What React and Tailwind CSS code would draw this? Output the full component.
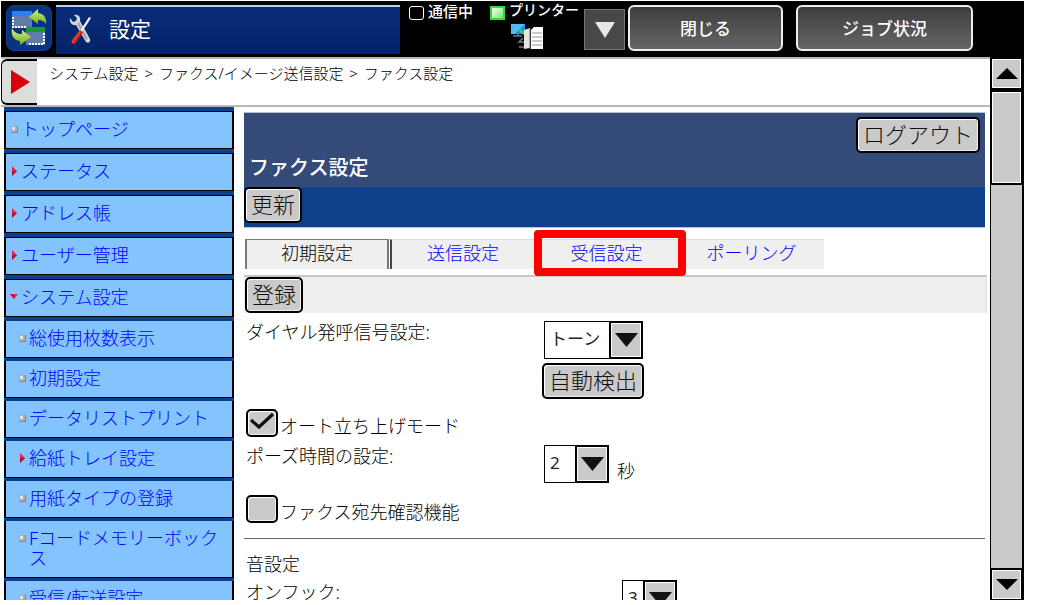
import React, { useState } from 'react';

const MENU = [
  { label: 'トップページ', mark: 'square' },
  { label: 'ステータス', mark: 'right' },
  { label: 'アドレス帳', mark: 'right' },
  { label: 'ユーザー管理', mark: 'right' },
  { label: 'システム設定', mark: 'down' },
];

const SUB_MENU = [
  { label: '総使用枚数表示', mark: 'square' },
  { label: '初期設定', mark: 'square' },
  { label: 'データリストプリント', mark: 'square' },
  { label: '給紙トレイ設定', mark: 'right' },
  { label: '用紙タイプの登録', mark: 'square' },
  { label: 'Fコードメモリーボックス', mark: 'square' },
  { label: '受信/転送設定', mark: 'square' },
];

const TABS = [
  { id: 'send', label: '送信設定' },
  { id: 'receive', label: '受信設定', marked: true },
  { id: 'polling', label: 'ポーリング' },
];

function Mark({ type }) {
  return (
    <svg className="h-5 w-2 shrink-0" viewBox="0 0 8 20">
      {type === 'square' && <>
        <rect x="1" y="7" width="7" height="7" fill="#858585" />
        <rect x="1" y="7" width="6" height="6" fill="#b0aca8" />
        <rect x="2" y="8" width="3" height="3" fill="#e4e4e4" />
      </>}
      {type === 'right' && <>
        <path d="M2 5l5 5-5 5z" fill="#f0204a" />
        <path d="M2 10h5l-5 5z" fill="#a01838" />
      </>}
      {type === 'down' && <>
        <path d="M0 7h8l-4 5z" fill="#e8203c" />
        <path d="M0 7h4v5z" fill="#b01830" />
      </>}
    </svg>
  );
}

function GrayButton({ children }) {
  return (
    <button className="h-9 shrink-0 rounded-[5px] border-2 border-black bg-[#cacaca] px-[5px] pb-[2px] text-[22px] leading-7 text-[#111] shadow-[inset_1px_1px_0_#fff,inset_-1px_-1px_0_#eee]">
      {children}
    </button>
  );
}

function Dropdown({ id, label, value, options, className }) {
  const [val, setVal] = useState(value);
  return (
    <div className={`flex h-[38px] border border-black bg-white ${className}`}>
      <select id={id} aria-label={label} value={val} onChange={e => setVal(e.target.value)}
        className="min-w-0 flex-1 appearance-none pb-[2px] pl-[5px] text-[17px] leading-8 font-normal text-[#222] outline-none">
        {options.map(o => <option key={o}>{o}</option>)}
      </select>
      <span className="flex w-[33px] shrink-0 items-center justify-center border-y border-r border-l-2 border-black bg-[#cacaca] shadow-[inset_0_0_0_1px_#fff]">
        <svg width="23" height="14" viewBox="0 0 23 14"><path d="M0 0h23L11.5 14z" fill="#111" /></svg>
      </span>
    </div>
  );
}

function CheckRow({ label, defaultChecked }) {
  return (
    <label className="flex h-8 items-start gap-[2px] pl-[2px]">
      <span className="grid shrink-0">
        <input type="checkbox" defaultChecked={defaultChecked}
          className="peer col-start-1 row-start-1 h-7 w-8 appearance-none rounded-[5px] border-2 border-black bg-[#cacaca] shadow-[inset_1px_1px_0_#fff,inset_-1px_-1px_0_#eee]" />
        <svg className="pointer-events-none invisible col-start-1 row-start-1 h-7 w-8 peer-checked:visible" viewBox="0 0 32 28">
          <path d="M5 11l8 7L27 5" fill="none" stroke="#111" strokeWidth="3.2" />
        </svg>
      </span>
      <span className="pt-[5px]">{label}</span>
    </label>
  );
}

function SyncIcon() {
  return (
    <svg width="36" height="38" viewBox="0 0 36 38">
      <defs>
        <linearGradient id="leaf" x1="0" y1="0" x2="0" y2="1">
          <stop offset="0" stopColor="#d5ef8a" />
          <stop offset="1" stopColor="#6fb41c" />
        </linearGradient>
      </defs>
      <rect x="1" y="2" width="20" height="17" fill="#5f7cab" />
      <rect x="1" y="2" width="20" height="5" fill="#2a80f0" />
      <path d="M2 8v10h14" fill="none" stroke="#fff" strokeWidth="2" strokeDasharray="2 1" />
      <rect x="15" y="19" width="19" height="17" fill="#5f7cab" />
      <rect x="15" y="18" width="19" height="5" fill="#1a9632" />
      <path d="M33 24v11H18" fill="none" stroke="#fff" strokeWidth="2" strokeDasharray="2 1" />
      <path d="M18 8L27 0v4c6 1 9 5 8 11-2-3-4-4-8-4v4z" fill="url(#leaf)" />
      <path d="M1 19c-1 7 1 12 8 13v4l11-8-9-7v4c-5 0-8-2-10-6z" fill="url(#leaf)" />
    </svg>
  );
}

function ToolsIcon() {
  return (
    <svg width="24" height="34" viewBox="0 0 24 34">
      <path d="M1 4l3 4 3-1 1-3-3-3c4-1 7 2 6 6l10 18c1 3-2 5-4 3L7 11C3 12 0 8 1 4z" fill="#d4d6d8" />
      <path d="M8 10l9 16 2-1L10 8z" fill="#a4a8ac" />
      <path d="M22 4l-9 14-2-1L20 3z" fill="#f2f2f2" />
      <path d="M11 16l3 2-7 11c-2 2-6 0-4-3z" fill="#e23a2a" />
      <path d="M13 18L6 29" stroke="#8c1710" />
    </svg>
  );
}

function PrinterIcon() {
  return (
    <svg width="32" height="27" viewBox="0 0 32 27">
      <rect x="0" y="1" width="14" height="10" fill="#1590e0" />
      <path d="M0 1h14L4 11H0z" fill="#52b8f5" />
      <path d="M7 11v2M2 13h9M12 15l-4 4h5M8 24h5" fill="none" stroke="#777" strokeWidth="1.5" />
      <path d="M9 7l4 4" stroke="#2be02b" strokeWidth="2.5" />
      <path d="M13 7l6-2v20l-6 1z" fill="#e4e4e4" />
      <path d="M20 7l3-3h9v22H20z" fill="#fff" />
      <path d="M21 10h10M21 14h10M21 18h10M21 22h10" stroke="#999" />
      <path d="M19 5v21" stroke="#777" />
    </svg>
  );
}

function TopBar() {
  const darkBtn = 'h-[46px] rounded-md border-2 border-[#eee] bg-linear-to-b from-[#3e3e3e] to-[#666] pt-px text-[17px] font-medium text-white';
  return (
    <header className="flex h-14 shrink-0 bg-black pt-1 pl-[5px] text-white">
      <button aria-label="切替" className="flex h-[46px] w-[46px] shrink-0 items-center justify-center rounded-lg border border-[#123f90] bg-[#0a3480]">
        <SyncIcon />
      </button>
      <div className="ml-1 flex h-[49px] min-w-0 flex-1 items-center gap-4 border-t-2 border-[#c0cce4] bg-linear-to-b from-[#0a2c78] to-[#04226a] pl-[13px]">
        <ToolsIcon />
        <h1 className="pb-1 text-[21px] leading-8 font-normal">設定</h1>
      </div>
      <div className="flex w-[184px] shrink-0 text-[15px] leading-4 font-medium">
        <div className="flex h-4 items-center gap-1 pl-[9px]">
          <span className="h-[14px] w-[15px] rounded-[3px] border border-white" />
          <span className="pb-1">通信中</span>
        </div>
        <div className="ml-4 flex flex-col">
          <div className="flex h-4 items-center gap-1 pl-px text-[14px] whitespace-nowrap">
            <span className="h-[14px] w-[15px] border-2 border-[#2fe02f] bg-linear-to-br from-white to-[#5fe65f]" />
            <span className="pb-[6px]">プリンター</span>
          </div>
          <div className="pt-[2px] pl-[22px]"><PrinterIcon /></div>
        </div>
      </div>
      <button aria-label="開く" className="mt-1 flex h-[41px] w-[41px] shrink-0 items-center justify-center border border-[#777] bg-[#484848]">
        <svg width="20" height="16" viewBox="0 0 20 16"><path d="M0 0h20L10 16z" fill="#e6e6e6" /></svg>
      </button>
      <button className={`ml-[3px] w-[155px] shrink-0 ${darkBtn}`}>閉じる</button>
      <button className={`mr-[51px] ml-[13px] w-[177px] shrink-0 ${darkBtn}`}>ジョブ状況</button>
    </header>
  );
}

function Sidebar() {
  return (
    <nav className="ml-[3px] w-[230px] shrink-0 overflow-hidden bg-[#0d408b] pt-1 text-[18px] leading-5 text-[#0000ff]">
      <ul className="flex flex-col gap-1">
        {MENU.map(m => (
          <li key={m.label}>
            <a href="#" className="flex h-[38px] items-center gap-[3px] border-x-2 border-y border-black bg-[#84c4fe] pb-[2px] pl-1">
              <Mark type={m.mark} />{m.label}
            </a>
          </li>
        ))}
      </ul>
      <ul className="mt-1 flex flex-col gap-[3px]">
        {SUB_MENU.map(m => (
          <li key={m.label}>
            <a href="#" className="flex min-h-[37px] items-start gap-[3px] border-x-2 border-b border-black bg-[#84c4fe] pt-[7px] pr-3 pb-[9px] pl-3">
              <Mark type={m.mark} /><span className="break-all">{m.label}</span>
            </a>
          </li>
        ))}
      </ul>
    </nav>
  );
}

function Scrollbar() {
  const box = 'flex shrink-0 items-center justify-center border border-white bg-[#cacaca]';
  return (
    <div className="flex w-[34px] shrink-0 flex-col bg-black pt-[2px] pb-px">
      <button aria-label="上へ" className={`mr-[3px] ml-[2px] h-[29px] ${box}`}>
        <svg width="22" height="11" viewBox="0 0 22 11"><path d="M0 11h22L11 0z" fill="#000" /></svg>
      </button>
      <div className={`mt-1 mr-[3px] ml-[2px] h-[91px] ${box}`} />
      <div className="mt-[2px] mr-[2px] ml-px flex-1 bg-[#cacaca]" />
      <button aria-label="下へ" className={`mt-[2px] mr-[3px] ml-[2px] h-[29px] ${box}`}>
        <svg width="22" height="11" viewBox="0 0 22 11"><path d="M0 0h22L11 11z" fill="#000" /></svg>
      </button>
    </div>
  );
}

export default function App() {
  return (
    <div lang="ja" className="h-screen bg-white pt-px pr-4 pb-[5px] pl-px font-['Noto_Sans','Noto_Sans_CJK_JP',sans-serif] font-light text-black">
      <div className="flex h-full flex-col overflow-hidden">
        <TopBar />
        <div className="flex min-h-0 flex-1">
          <div className="flex min-w-0 flex-1 flex-col">
            {/* Breadcrumb */}
            <div className="flex h-[50px] shrink-0 border-y-2 border-[#b8b8b8]">
              <button aria-label="メニュー" className="flex w-9 shrink-0 items-center rounded-l-md border-y-2 border-l border-black bg-[#dcdedc] pl-[9px]">
                <svg width="19" height="24" viewBox="0 0 19 24"><path d="M0 0l19 12L0 24z" fill="#d8000c" /></svg>
              </button>
              <p className="pt-[2px] pl-3 text-[15px] leading-6">
                システム設定 <span className="mx-[2px]">&gt;</span> ファクス/イメージ送信設定 <span className="mx-[2px]">&gt;</span> ファクス設定
              </p>
            </div>

            <div className="flex min-h-0 flex-1">
              <Sidebar />
              <main className="min-w-0 flex-1 overflow-hidden pt-[5px] pl-[10px] text-[18px] leading-6">
                {/* Page header */}
                <div className="mr-[5px] border-y border-[#b8c0d0]">
                  <div className="flex h-[74px] justify-between bg-[#344b7a] pt-1 pr-[5px] pl-[5px]">
                    <h2 className="self-end pb-[7px] text-[20px] leading-6 font-medium text-white">ファクス設定</h2>
                    <GrayButton>ログアウト</GrayButton>
                  </div>
                  <div className="h-10 bg-[#0f408b]"><GrayButton>更新</GrayButton></div>
                </div>

                {/* Tabs */}
                <div role="tablist" className="mt-[11px] flex h-[30px] leading-[26px]">
                  <button role="tab" aria-selected="true"
                    className="ml-px h-[30px] w-[144px] border-x-2 border-t border-[#777] bg-[#efefef] pb-[3px]">
                    初期設定
                  </button>
                  {TABS.map((t, i) => (
                    <a key={t.id} href="#" role="tab" aria-selected="false"
                      className={`relative h-[30px] border-t border-t-[#ddd] bg-[#efefef] text-center text-[#0000ff] ${t.marked ? 'z-10' : ''} ${i === 0 ? 'ml-px w-[144px] border-l-2 border-l-[#444]' : 'w-[145px]'}`}>
                      {t.label}
                      {t.marked && <span className="absolute -top-[10px] left-0 h-[46px] w-[152px] rounded-[4px] border-8 border-[#fe0000]" />}
                    </a>
                  ))}
                </div>

                <div className="mt-[6px] mr-[3px] h-[38px] border-t-2 border-r border-t-[#c8c8c8] border-r-[#ddd] bg-[#efefef] pl-px">
                  <GrayButton>登録</GrayButton>
                </div>

                {/* Dial / pause settings */}
                <div className="grid grid-cols-[296px_1fr] pt-[7px] pl-[2px]">
                  <label htmlFor="dial">ダイヤル発呼信号設定:</label>
                  <div className="flex flex-col items-start gap-1 pt-px">
                    <Dropdown id="dial" value="トーン" options={['トーン', 'パルス']} className="ml-[2px] w-[99px]" />
                    <GrayButton>自動検出</GrayButton>
                  </div>
                </div>
                <div className="pt-[10px]"><CheckRow label="オート立ち上げモード" defaultChecked /></div>
                <div className="grid grid-cols-[298px_1fr] pt-[3px] pl-[2px]">
                  <label htmlFor="pause">ポーズ時間の設定:</label>
                  <div className="flex items-end gap-2 pt-px">
                    <Dropdown id="pause" value="2" options={['1', '2', '3', '4']} className="w-[65px]" />
                    <span>秒</span>
                  </div>
                </div>
                <div className="pt-3"><CheckRow label="ファクス宛先確認機能" /></div>

                {/* Sound settings */}
                <div className="mt-[11px] mr-[5px] border-t border-[#666] pt-[13px] pl-[2px]">
                  <h3>音設定</h3>
                  <div className="grid grid-cols-[376px_1fr] pt-1">
                    <label htmlFor="onhook">オンフック:</label>
                    <Dropdown id="onhook" value="3" options={['1', '2', '3', '4', '5']} className="w-[55px]" />
                  </div>
                </div>
              </main>
            </div>
          </div>
          <Scrollbar />
        </div>
      </div>
    </div>
  );
}
